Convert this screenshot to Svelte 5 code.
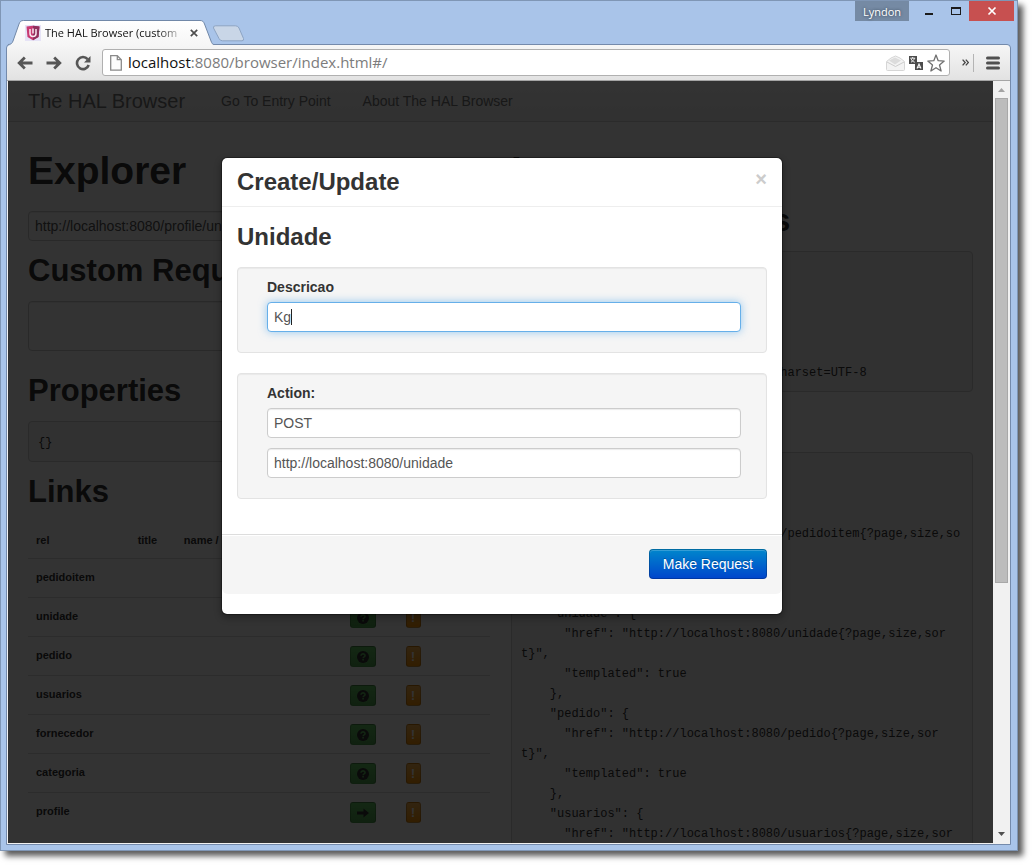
<script>
  const links = [
    { rel: 'pedidoitem', icon: 'question' },
    { rel: 'unidade', icon: 'question' },
    { rel: 'pedido', icon: 'question' },
    { rel: 'usuarios', icon: 'question' },
    { rel: 'fornecedor', icon: 'question' },
    { rel: 'categoria', icon: 'question' },
    { rel: 'profile', icon: 'arrow' }
  ];

  const responseHeaders = [
    '200 success',
    '',
    'Date: Tue, 21 Jul 2015 12:00:00 GMT',
    'Server: Apache-Coyote/1.1',
    'Transfer-Encoding: chunked',
    'Content-Type: application/hal+json;charset=UTF-8'
  ].join('\n');

  const wraps = [
    ['pedidoitem', 'so', 'rt'],
    ['unidade', 'sor', 't'],
    ['pedido', 'sor', 't'],
    ['usuarios', 'sor', 't']
  ];

  const responseBody =
    '{\n  "_links": {\n' +
    wraps
      .map(
        ([rel, head, tail]) =>
          `    "${rel}": {\n      "href": "http://localhost:8080/${rel}{?page,size,${head}\n${tail}}",\n      "templated": true\n    },`
      )
      .join('\n');

  let address = $state('http://localhost:8080/profile/unidade');
  let customHeaders = $state('');
  let descricao = $state('Kg');
  let method = $state('POST');
  let action = $state('http://localhost:8080/unidade');
</script>

<div class="desktop">
  <div class="window">
    <header class="strip">
      <div class="tab">
        <svg class="tab-shape" width="206" height="25" viewBox="0 0 206 25" aria-hidden="true">
          <defs>
            <linearGradient id="tabfill" x1="0" y1="0" x2="0" y2="1">
              <stop offset="0" stop-color="#ffffff" />
              <stop offset="1" stop-color="#f6f6f6" />
            </linearGradient>
          </defs>
          <path d="M0 25V24.5C3 24.5 4 23.5 5 21L11 4C12 1.500 13 .5 15.500 .5H192C194.500 .5 195.500 1.500 196.500 4L203 21C204 23.500 204.500 24.500 206 24.500V25Z" fill="url(#tabfill)" />
          <path d="M0 24.500C3 24.500 4 23.500 5 21L11 4C12 1.500 13 .5 15.500 .5H192C194.500 .5 195.500 1.500 196.500 4L203 21C204 23.500 204.500 24.500 206 24.500" fill="none" stroke="#7188a8" />
        </svg>
        <svg class="favicon" width="16" height="16" viewBox="0 0 16 16" aria-hidden="true">
          <rect width="16" height="16" fill="#e6e3f6" />
          <path d="M1.500 1.500 8 .8l6.500 .7-1 10.500L8 15.200 2.500 12Z" fill="#c83a72" />
          <path d="M8 .8l6.500 .7-1 10.500L8 15.200Z" fill="#8f2f5c" />
          <path d="M5 4v4.500a3 3 0 0 0 6 0V4M8 3.500v5" fill="none" stroke="#fbe9f1" stroke-width="1.500" />
        </svg>
        <span class="tab-title">The HAL Browser (custom</span>
        <button class="tab-close" aria-label="Close tab">
          <svg width="8" height="8" viewBox="0 0 8 8"><path d="M.8 .8l6.400 6.400M7.200 .8L.8 7.200" stroke="#4d4d4d" stroke-width="1.700" /></svg>
        </button>
      </div>
      <button class="new-tab" aria-label="New tab">
        <svg width="33" height="17" viewBox="0 0 33 17"><path d="M3.500 .8H23.500Q26 .8 27 3L31.500 13.500Q32 15.800 30 15.800H10.500Q8 15.800 7 13.500L1.500 3Q1 .8 3.500 .8Z" fill="#c9d6e7" stroke="#8da4c3" /></svg>
      </button>
      <div class="caption">
        <button class="user">Lyndon</button>
        <button class="cap" aria-label="Minimize"><svg width="10" height="10" viewBox="0 0 10 10"><path d="M1 7h8v2H1z" fill="#1b1b1b" /></svg></button>
        <button class="cap" aria-label="Maximize"><svg width="10" height="10" viewBox="0 0 10 10"><path d="M0 1h10v8H0zM1 3v5h8V3z" fill="#1b1b1b" fill-rule="evenodd" /></svg></button>
        <button class="cap close-window" aria-label="Close"><svg width="10" height="10" viewBox="0 0 10 10"><path d="M1.500 1.500l7 7M8.500 1.500l-7 7" stroke="#fff" stroke-width="1.700" /></svg></button>
      </div>
    </header>

    <div class="client">
      <div class="toolbar">
        <button class="tool" aria-label="Back"><svg width="16" height="16" viewBox="0 0 16 16"><path d="M15.500 8H2.500M7.800 2.500L2.200 8l5.600 5.500" fill="none" stroke="#565656" stroke-width="2.800" /></svg></button>
        <button class="tool" aria-label="Forward"><svg width="16" height="16" viewBox="0 0 16 16"><path d="M.5 8h13M8.200 2.500L13.800 8l-5.600 5.500" fill="none" stroke="#565656" stroke-width="2.800" /></svg></button>
        <button class="tool" aria-label="Reload"><svg width="16" height="16" viewBox="0 0 16 16"><path d="M12.600 4.200A6 6 0 1 0 13.700 10" fill="none" stroke="#565656" stroke-width="2.600" /><path d="M15.500 1v6.500H9Z" fill="#565656" /></svg></button>
        <div class="omnibox">
          <svg width="12" height="16" viewBox="0 0 12 16" aria-hidden="true"><path d="M.7 .7h6.600l4 4v10.500H.7zM7.300 .7v4h4" fill="#fdfdfd" stroke="#8a8a8a" stroke-width="1.300" /></svg>
          <span class="url"><b>localhost</b>:8080/browser/index.html#/</span>
          <svg class="mail" width="19" height="16" viewBox="0 0 19 16" aria-hidden="true"><path d="M.5 6.500L5 3l4.500-2L14 3l4.500 3.500v8q0 1-1 1h-16q-1 0-1-1z" fill="#f3f3f3" stroke="#d6d6d6" /><path d="M3 5.500l6-3 6 3-6 4z" fill="#dcdcdc" /><path d="M1 7l8.500 4.500L18 7" fill="none" stroke="#cdcdcd" /></svg>
          <svg width="14" height="14" viewBox="0 0 14 14" aria-hidden="true"><path d="M0 0h8v8H0zM6 6h8v8H6z" fill="#4c4c4c" /><path d="M1.200 2.200h5M3.700 1v1.200M2 6.200C4 5 5 4 5.400 2.400M2.200 3C3 5 4 5.600 5.800 6.200" fill="none" stroke="#fff" stroke-width=".9" /><path d="M8 12.500L10 8l2 4.500M8.800 11.200h2.400" fill="none" stroke="#fff" stroke-width="1.100" /></svg>
          <svg width="18" height="18" viewBox="0 0 18 18" aria-hidden="true"><path d="M9 1l2.200 5.700 6 .4-4.700 3.900 1.600 6L9 13.700 3.900 17l1.600-6L.8 7.100l6-.4z" fill="#fff" stroke="#707070" stroke-width="1.300" stroke-linejoin="round" /></svg>
        </div>
        <button class="more" aria-label="More extensions"><svg width="7" height="7" viewBox="0 0 7 7"><path d="M.6 .6l2.600 2.900L.6 6.400M3.800 .6l2.600 2.900-2.600 2.900" fill="none" stroke="#444" stroke-width="1.300" /></svg></button>
        <button class="menu" aria-label="Menu"><svg width="14" height="14" viewBox="0 0 14 14"><path d="M1.500 2h11M1.500 7h11M1.500 12h11" stroke="#505050" stroke-width="3" stroke-linecap="round" /></svg></button>
      </div>

      <div class="viewport">
        <div class="page">
          <nav class="navbar">
            <a class="brand" href="#/">The HAL Browser</a>
            <a class="nav-link" href="#/entry">Go To Entry Point</a>
            <a class="nav-link" href="#/about">About The HAL Browser</a>
          </nav>
          <main class="columns">
            <section>
              <h1>Explorer</h1>
              <input class="address" aria-label="Address" bind:value={address} />
              <h2><label for="custom">Custom Request Headers</label></h2>
              <textarea id="custom" bind:value={customHeaders}></textarea>
              <h2>Properties</h2>
              <pre>{'{}'}</pre>
              <h2>Links</h2>
              <table>
                <thead>
                  <tr><th class="c-rel">rel</th><th class="c-title">title</th><th class="c-name">name / index</th><th class="c-docs">docs</th><th class="c-get">GET</th><th>NON-GET</th></tr>
                </thead>
                <tbody>
                  {#each links as link (link.rel)}
                    <tr>
                      <th scope="row">{link.rel}</th>
                      <td></td>
                      <td></td>
                      <td></td>
                      <td>
                        <button class="mini get" aria-label="Get {link.rel}">
                          <svg width="12" height="12" viewBox="0 0 12 12">
                            {#if link.icon === 'question'}
                              <circle cx="6" cy="6" r="6" fill="#333" />
                              <path d="M4 4.800C4 2.200 8.200 2.400 8 4.700C7.900 6 6.200 5.800 6.100 7.200M6.100 8v1.600" fill="none" stroke="#5bb75b" stroke-width="1.600" />
                            {:else}
                              <path d="M0 4.500h6.500V1.500L12 6l-5.500 4.500V7.500H0z" fill="#333" />
                            {/if}
                          </svg>
                        </button>
                      </td>
                      <td><button class="mini non-get" aria-label="Non-get {link.rel}">!</button></td>
                    </tr>
                  {/each}
                </tbody>
              </table>
            </section>
            <section>
              <h1>Inspector</h1>
              <h2>Response Headers</h2>
              <pre>{responseHeaders}</pre>
              <h2>Response Body</h2>
              <pre>{responseBody}</pre>
            </section>
          </main>
          <div class="backdrop"></div>
          <form class="modal" role="dialog" aria-labelledby="dialog-title" onsubmit={(e) => e.preventDefault()}>
            <div class="modal-header">
              <h3 id="dialog-title">Create/Update</h3>
              <button type="button" class="dismiss" aria-label="Close dialog">×</button>
            </div>
            <div class="modal-body">
              <h3>Unidade</h3>
              <div class="well">
                <label for="descricao">Descricao</label>
                <div class="field">
                  <input id="descricao" class="focused" bind:value={descricao} />
                  <span class="caret"></span>
                </div>
              </div>
              <div class="well">
                <label for="method">Action:</label>
                <input id="method" bind:value={method} />
                <input aria-label="Action URL" bind:value={action} />
              </div>
            </div>
            <div class="modal-footer">
              <button class="primary">Make Request</button>
            </div>
          </form>
        </div>
        <div class="scrollbar">
          <svg width="17" height="17" viewBox="0 0 17 17" aria-hidden="true"><path d="M5 11l3.500-4 3.500 4z" fill="#a3a3a3" /></svg>
          <div class="track"><div class="thumb"></div></div>
          <svg width="17" height="17" viewBox="0 0 17 17" aria-hidden="true"><path d="M5 6l3.500 4L12 6z" fill="#505050" /></svg>
        </div>
      </div>
    </div>
  </div>
</div>

<style>
  :global(body) {
    background: #fff;
  }
  * {
    box-sizing: border-box;
  }
  button {
    font-family: inherit;
    border: 0;
    padding: 0;
    background: none;
  }
  svg {
    display: block;
    flex: none;
  }
  .desktop {
    height: 100vh;
    padding: 0 15px 15px 0;
    overflow: hidden;
    font-family: 'Liberation Sans', Arial, sans-serif;
    font-size: 14px;
    line-height: 20px;
    color: #333;
  }
  .window {
    height: 100%;
    display: flex;
    flex-direction: column;
    padding: 0 6px 5px 5px;
    border: 1px solid #7f96b5;
    background: #a9c4e9;
    box-shadow: 5px 5px 6px rgba(0, 0, 0, 0.65);
  }

  .strip {
    height: 43px;
    flex: none;
    display: flex;
    align-items: flex-end;
    padding-left: 2px;
    font-family: 'Open Sans', 'Noto Sans', sans-serif;
  }
  .tab {
    position: relative;
    z-index: 1;
    width: 206px;
    height: 25px;
    margin-bottom: -1px;
    padding: 0 16px 0 17px;
    display: flex;
    align-items: center;
    gap: 4px;
  }
  .tab-shape {
    position: absolute;
    left: 0;
    top: 0;
  }
  .favicon,
  .tab-title,
  .tab-close {
    position: relative;
  }
  .tab-title {
    flex: 1;
    overflow: hidden;
    white-space: nowrap;
    font-size: 11px;
    color: #111;
    mask-image: linear-gradient(90deg, #000 80%, rgba(0, 0, 0, 0.2) 96%);
  }
  .new-tab {
    margin: 0 0 2px -2px;
  }
  .caption {
    margin-left: auto;
    margin-right: -3px;
    align-self: flex-start;
    display: flex;
    height: 20px;
  }
  .user {
    width: 54px;
    margin-right: 6px;
    background: #758aa4;
    color: #fff;
    font-size: 11px;
    text-shadow: 0 0 3px #2c3848;
  }
  .cap {
    width: 27px;
    display: grid;
    place-items: center;
  }
  .close-window {
    width: 45px;
    background: #c75050;
  }

  .client {
    flex: 1;
    min-height: 0;
    display: flex;
    flex-direction: column;
    border: 1px solid #748aab;
    border-radius: 4px 4px 0 0;
  }
  .toolbar {
    height: 36px;
    flex: none;
    display: flex;
    align-items: center;
    padding: 0 10px;
    background: linear-gradient(#f6f6f6, #e2e2e2);
    border-bottom: 1px solid #a5a5a5;
    border-radius: 4px 4px 0 0;
  }
  .tool {
    margin-right: 13px;
  }
  .omnibox {
    flex: 1;
    height: 27px;
    margin-left: -2px;
    padding: 0 4px 0 7px;
    display: flex;
    align-items: center;
    gap: 4px;
    background: #fff;
    border: 1px solid #b0b0b0;
    border-radius: 3px;
  }
  .url {
    flex: 1;
    padding: 0 0 2px 2px;
    font-family: 'Open Sans', 'Noto Sans', sans-serif;
    font-size: 15px;
    color: #7c7c7c;
    white-space: nowrap;
  }
  .url b {
    font-weight: 400;
    color: #111;
  }
  .more {
    height: 18px;
    margin-left: 12px;
    padding-right: 4px;
    border-right: 1px solid #b4b4b4;
  }
  .menu {
    margin-left: 12px;
  }

  .viewport {
    flex: 1;
    min-height: 0;
    display: flex;
    border: 1px solid #f1f1f1;
    border-width: 0 0 1px 1px;
  }
  .page {
    position: relative;
    flex: 1;
    overflow: hidden;
    background: #fff;
  }
  .navbar {
    height: 41px;
    display: flex;
    align-items: center;
    background: linear-gradient(#fff, #f2f2f2);
    border-bottom: 1px solid #d4d4d4;
  }
  .navbar a {
    color: #777;
    text-decoration: none;
  }
  .brand {
    padding: 0 20px;
    font-size: 20px;
  }
  .nav-link {
    padding: 0 16px;
  }
  .columns {
    display: grid;
    grid-template-columns: 1fr 1fr;
    gap: 21px;
    padding: 19px 20px;
  }
  section {
    min-width: 0;
  }
  h1,
  h2 {
    margin: 10px 0;
    line-height: 40px;
    font-weight: 700;
    white-space: nowrap;
  }
  h1 {
    font-size: 39px;
  }
  h2 {
    font-size: 31px;
  }
  h3 {
    margin: 0;
    font-size: 24px;
    line-height: 30px;
  }
  input,
  textarea {
    display: block;
    width: 100%;
    height: 30px;
    margin: 0 0 10px;
    padding: 4px 6px;
    border: 1px solid #ccc;
    border-radius: 4px;
    background: #fff;
    box-shadow: inset 0 1px 1px rgba(0, 0, 0, 0.08);
    font: inherit;
    color: #555;
    outline: 0;
  }
  .address {
    margin-top: 20px;
  }
  textarea {
    height: 50px;
    margin-bottom: 20px;
    resize: none;
  }
  pre {
    margin: 0 0 10px;
    padding: 11px 9px 8px;
    border: 1px solid #d0d0d0;
    border-radius: 4px;
    background: #f5f5f5;
    font-family: 'Liberation Mono', monospace;
    font-size: 12px;
    line-height: 20px;
  }
  table {
    width: 100%;
    table-layout: fixed;
    border-collapse: collapse;
    font-size: 11px;
  }
  th,
  td {
    height: 39px;
    padding: 0 8px 2px;
    border-top: 1px solid #ddd;
    text-align: left;
    white-space: nowrap;
  }
  td {
    padding: 2px 8px 0;
  }
  thead th {
    height: 36px;
    padding: 0 8px;
    border: 0;
  }
  .c-rel {
    width: 22%;
  }
  .c-title {
    width: 10%;
  }
  .c-name {
    width: 20%;
  }
  .c-docs {
    width: 16%;
  }
  .c-get {
    width: 12%;
  }
  .mini {
    display: grid;
    place-items: center;
    height: 21px;
    border: 1px solid rgba(0, 0, 0, 0.2);
    border-radius: 3px;
    color: #fff;
    font-size: 11px;
  }
  .get {
    width: 26px;
    background: linear-gradient(#62c462, #51a351);
  }
  .non-get {
    width: 15px;
    background: linear-gradient(#fbb450, #f89406);
    font-size: 12px;
    font-weight: 700;
  }

  .backdrop {
    position: absolute;
    inset: 0;
    background: rgba(0, 0, 0, 0.8);
  }
  .modal {
    position: absolute;
    top: 76px;
    left: round(up, 50%, 1px);
    width: 562px;
    margin-left: -280px;
    padding-bottom: 20px;
    border: 1px solid rgba(0, 0, 0, 0.3);
    border-radius: 6px;
    background: #fff;
    background-clip: padding-box;
    box-shadow: 0 3px 7px rgba(0, 0, 0, 0.3);
  }
  .modal-header {
    display: flex;
    justify-content: space-between;
    align-items: center;
    padding: 9px 15px;
    border-bottom: 1px solid #eee;
  }
  .dismiss {
    margin-bottom: 6px;
    font-size: 20px;
    font-weight: 700;
    line-height: 20px;
    color: #ccc;
  }
  .modal-body {
    display: flex;
    flex-direction: column;
    padding: 15px 15px 35px;
  }
  .modal-body h3 {
    margin-bottom: 15px;
  }
  .well {
    padding: 9px 25px 10px 29px;
    border: 1px solid #e3e3e3;
    border-radius: 4px;
    background: #f5f5f5;
    box-shadow: inset 0 1px 1px rgba(0, 0, 0, 0.05);
  }
  .well + .well {
    margin-top: 20px;
  }
  .well label {
    display: block;
    margin-bottom: 5px;
    font-weight: 700;
  }
  .field {
    position: relative;
  }
  .focused {
    border-color: #66afe9;
    box-shadow: 0 0 8px rgba(82, 168, 236, 0.6);
    caret-color: transparent;
  }
  .caret {
    position: absolute;
    left: 24px;
    top: 7px;
    width: 1px;
    height: 16px;
    background: #222;
  }
  .modal-footer {
    display: flex;
    justify-content: flex-end;
    padding: 14px 15px 15px;
    border-top: 1px solid #ddd;
    border-radius: 0 0 6px 6px;
    background: #f5f5f5;
    box-shadow: inset 0 1px 0 #fff;
  }
  .primary {
    height: 30px;
    padding: 0 13px;
    border: 1px solid rgba(0, 0, 0, 0.2);
    border-radius: 4px;
    background: linear-gradient(#0088cc, #0044cc) border-box;
    box-shadow: inset 0 1px 0 rgba(255, 255, 255, 0.2);
    font-size: 14px;
    color: #fff;
    text-shadow: 0 -1px 0 rgba(0, 0, 0, 0.25);
  }

  .scrollbar {
    width: 17px;
    flex: none;
    display: flex;
    flex-direction: column;
    background: #f1f1f1;
  }
  .track {
    flex: 1;
    padding: 0 2px;
  }
  .thumb {
    height: calc(100% * 2 / 3);
    border: 1px solid #a8a8a8;
    background: #bcbcbc;
  }
</style>
